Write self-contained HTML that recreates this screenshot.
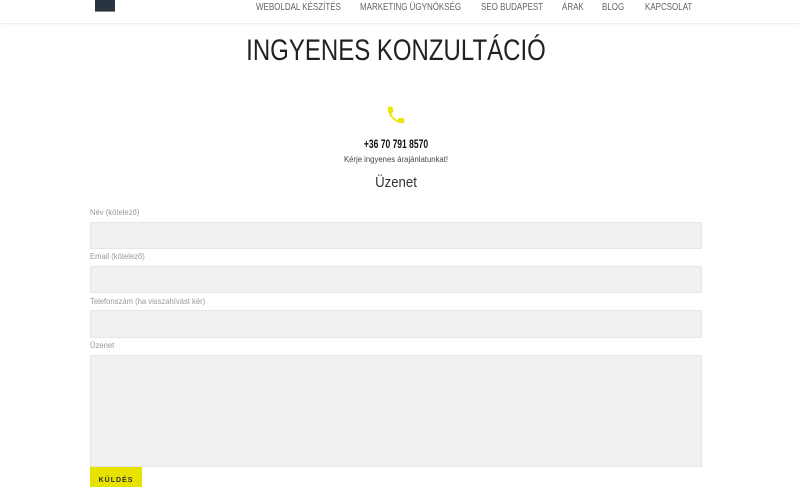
<!DOCTYPE html>
<html><head><meta charset="utf-8"><style>
*{margin:0;padding:0;box-sizing:border-box}
body{width:800px;height:480px;overflow:hidden;background:#fff;font-family:"Liberation Sans",sans-serif;position:relative;color:#333}
.hdr{position:absolute;left:0;top:0;width:800px;height:24px;border-bottom:1px solid #eee;box-shadow:0 1px 2px rgba(0,0,0,.03)}
.logo{position:absolute;left:95px;top:0;width:20px;height:12px;background:#2a3440;border-bottom:1px solid #888}
.nav{position:absolute;top:1px;font-size:10.5px;color:#666;white-space:nowrap;transform:scaleX(.76);transform-origin:left top}
h1{position:absolute;top:34px;left:0;width:792px;text-align:center;font-weight:300;font-size:30px;color:#222;transform:scaleX(.8)}
.c{position:absolute;left:0;width:792px;text-align:center}
.lbl{position:absolute;left:90px;font-size:8.5px;color:#999;white-space:nowrap;transform:scaleX(.9);transform-origin:left top}
.in{position:absolute;left:90px;width:612px;background:#f2f0f1;border:1px solid #e6e6e6}
.btn{position:absolute;left:90px;top:467px;width:52px;height:20px;background:#e8e200;font-size:7px;font-weight:bold;color:#333;text-align:center;padding-top:10px;letter-spacing:1px}
</style></head><body>
<div class="hdr"><div class="logo"></div>
<span class="nav" style="left:256px">WEBOLDAL KÉSZÍTÉS</span>
<span class="nav" style="left:360px">MARKETING ÜGYNÖKSÉG</span>
<span class="nav" style="left:481px">SEO BUDAPEST</span>
<span class="nav" style="left:562px">ÁRAK</span>
<span class="nav" style="left:602px">BLOG</span>
<span class="nav" style="left:645px">KAPCSOLAT</span>
</div>
<h1>INGYENES KONZULTÁCIÓ</h1>
<svg style="position:absolute;left:385px;top:104px" width="22" height="22" viewBox="0 0 24 24"><path fill="#e8e800" d="M6.6 10.8c1.4 2.8 3.8 5.1 6.6 6.6l2.2-2.2c.3-.3.7-.4 1-.2 1.1.4 2.3.6 3.6.6.6 0 1 .4 1 1V20c0 .6-.4 1-1 1C10.6 21 3 13.4 3 4c0-.6.4-1 1-1h3.5c.6 0 1 .4 1 1 0 1.3.2 2.5.6 3.6.1.3 0 .7-.2 1z"/></svg>
<div class="c" style="top:139px;font-size:11.5px;font-weight:bold;color:#111;transform:scaleX(.74)">+36 70 791 8570</div>
<div class="c" style="top:154px;font-size:8.5px;color:#444;transform:scaleX(.91)">Kérje ingyenes árajánlatunkat!</div>
<div class="c" style="top:174px;font-size:15px;font-weight:300;color:#333;transform:scaleX(.88)">Üzenet</div>
<div class="lbl" style="top:207px">Név (kötelező)</div>
<div class="in" style="top:222px;height:27px"></div>
<div class="lbl" style="top:251px">Email (kötelező)</div>
<div class="in" style="top:266px;height:27px"></div>
<div class="lbl" style="top:296px">Telefonszám (ha visszahívást kér)</div>
<div class="in" style="top:310px;height:28px"></div>
<div class="lbl" style="top:340px">Üzenet</div>
<div class="in" style="top:355px;height:112px"></div>
<div class="btn">KÜLDÉS</div>
</body></html>
